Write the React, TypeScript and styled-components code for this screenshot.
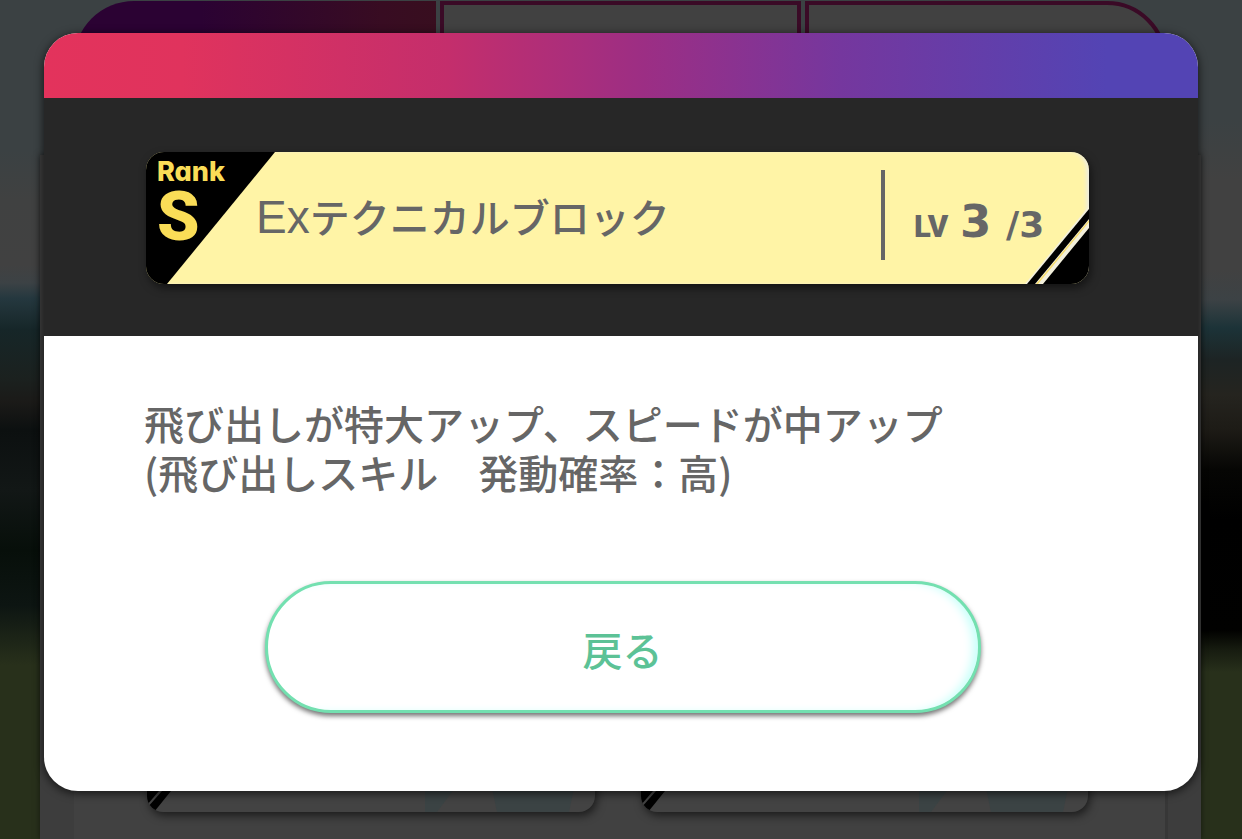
import React from "react";
import styled, { createGlobalStyle } from "styled-components";

const GlobalStyle = createGlobalStyle`
  *, *::before, *::after { box-sizing: border-box; }
  body {
    margin: 0;
    background: #28301b;
    font-family: "Liberation Sans", "Noto Sans CJK JP", sans-serif;
    color: #666;
  }
  h1, p { margin: 0; }
`;

const Screen = styled.div`
  display: grid;
  grid-template-columns: minmax(0, 1fr);
  min-height: 100vh;
  overflow: hidden;
  background:
    linear-gradient(
      180deg,
      #3b4143 0,
      #3b4143 120px,
      #414141 180px,
      #414141 270px,
      #3c4245 300px,
      #1c3338 328px,
      #1d2424 360px,
      #25241f 395px,
      #1d1b16 430px,
      #060604 470px,
      #000 520px,
      #010100 630px,
      #171c10 650px,
      #28301b 672px
    ) 100% 0 / 50% 100% no-repeat,
    linear-gradient(
      180deg,
      #3b4143 0,
      #3b4143 150px,
      #404141 200px,
      #414141 265px,
      #3c4245 283px,
      #25383f 298px,
      #162628 330px,
      #1b211f 378px,
      #1b1a18 402px,
      #0c1010 430px,
      #121716 490px,
      #070f0a 550px,
      #0d1512 605px,
      #28301b 665px
    );

  > * { grid-area: 1 / 1; }
`;

const Behind = styled.div`
  display: flex;
  flex-direction: column;
  min-width: 0;
  padding: 1px 41px 0 40px;
`;

const TabStrip = styled.div`
  display: grid;
  grid-template-columns: 1fr 1fr 1fr;
  gap: 4px;
  height: 154px;
  padding: 0 34px;
`;

const TabShape = styled.div<{ $kind: "active" | "middle" | "last" }>`
  height: 72px;
  border: ${(p) => (p.$kind === "active" ? "0" : "4px solid #3a0a26")};
  border-radius: ${(p) =>
    p.$kind === "active" ? "60px 0 0 0" : p.$kind === "last" ? "0 60px 0 0" : "0"};
  background: ${(p) =>
    p.$kind === "active"
      ? "linear-gradient(90deg, #2b0233 0, #2b0233 35%, #380c22 85%, #380e1f 100%)"
      : "#414141"};
`;

const ListPanel = styled.div`
  flex: 1;
  display: flex;
  padding: 0 33px 0 34px;
  background: #3d3d3d;
  box-shadow: 0 0 6px rgba(0, 0, 0, 0.5);
`;

const ListInner = styled.div`
  flex: 1;
  display: grid;
  grid-template-columns: 1fr 1fr;
  gap: 46px;
  align-items: end;
  padding: 0 77px 27px 73px;
  border-right: 3px solid #373737;
  background: #414141;
`;

const ListCard = styled.div`
  height: 132px;
  overflow: hidden;
  border-radius: 0 0 16px 16px;
  background: #434343;
  box-shadow: 2px 4px 8px rgba(0, 0, 0, 0.55);

  svg { display: block; }
`;

const Dialog = styled.main`
  align-self: start;
  z-index: 1;
  min-width: 0;
  margin: 33px 44px 48px;
  overflow: hidden;
  border-radius: 34px;
  background: #fff;
  box-shadow: 0 2px 8px 1px rgba(0, 0, 0, 0.6);
`;

const TitleBar = styled.div`
  height: 65px;
  background: linear-gradient(
    91deg,
    #e3335c 0,
    #e0335d 12%,
    #c42e6c 35%,
    #9c2e84 52%,
    #75379e 69%,
    #5344b4 92%,
    #5344b4 100%
  );
`;

const SkillBand = styled.section`
  padding: 54px 109px 52px 102px;
  background: #272727;
`;

const SkillCard = styled.div`
  position: relative;
  display: flex;
  align-items: center;
  height: 132px;
  overflow: hidden;
  border-radius: 18px;
  background: #fff4a6;
  box-shadow: 2px 4px 8px rgba(0, 0, 0, 0.5);

  &::after {
    content: "";
    position: absolute;
    inset: 0;
    border-radius: 18px;
    box-shadow: inset -4px 0 5px -2px #e8eaf0;
  }
`;

const Corner = styled.svg<{ $side: "left" | "right" }>`
  position: absolute;
  top: 0;
  z-index: 1;
  ${(p) => p.$side}: 0;
`;

const Rank = styled.div`
  z-index: 2;
  align-self: stretch;
  width: 110px;
  padding: 5px 0 0 11px;
  color: #fadd57;
`;

const RankLabel = styled.div`
  font: 800 27px/30px Inter, sans-serif;
  font-feature-settings: "cv11";
`;

const RankGrade = styled.div`
  font: 900 68px/60px Roboto, sans-serif;
`;

const SkillName = styled.h1`
  flex: 1;
  font-size: 40px;
  font-weight: 500;
  line-height: 48px;
  white-space: nowrap;
`;

const Latin = styled.span`
  font-size: 46px;
  font-weight: 400;
`;

const Level = styled.div`
  z-index: 2;
  display: flex;
  align-items: baseline;
  width: 208px;
  height: 90px;
  margin-bottom: 6px;
  padding: 24px 0 0 29px;
  border-left: 4px solid #666;
  font-family: "DejaVu Sans", sans-serif;
  font-weight: 700;
  line-height: 56px;
`;

const LevelLabel = styled.span`
  width: 46px;
  font: 900 31px/56px Roboto, sans-serif;
`;

const LevelNow = styled.span`
  width: 46px;
  font-size: 45px;
`;

const LevelMax = styled.span`
  font-size: 36px;
`;

const Body = styled.section`
  display: flex;
  flex-direction: column;
  gap: 84px;
  padding: 63px 97px 78px 100px;
`;

const Description = styled.p`
  font: 500 40px/49px "Noto Sans CJK JP", sans-serif;
`;

const BackButton = styled.button`
  align-self: center;
  width: 716px;
  max-width: 100%;
  height: 132px;
  padding: 4px 0 0;
  border: 3px solid #73e0b0;
  border-radius: 66px;
  background: #fff;
  box-shadow: 0 3px 5px rgba(0, 0, 0, 0.55), inset -8px 0 10px -3px #c8fffa;
  color: #5cc296;
  font: 500 40px/48px "Noto Sans CJK JP", sans-serif;
  cursor: pointer;
`;

const CardArt = () => (
  <svg width="448" height="132" viewBox="0 0 448 132" aria-hidden="true">
    <path d="M0 111h12L0 125z" fill="#000" />
    <path d="M15 111h9L7 132H3L0 128z" fill="#000" />
    <path d="M278 108h30L290 132H278z" fill="#3b4344" />
    <path d="M345 108h82L422 132H350z" fill="#3b4344" />
  </svg>
);

export default function App() {
  return (
    <>
      <GlobalStyle />
      <Screen>
        <Behind aria-hidden="true">
          <TabStrip>
            <TabShape $kind="active" />
            <TabShape $kind="middle" />
            <TabShape $kind="last" />
          </TabStrip>
          <ListPanel>
            <ListInner>
              <ListCard><CardArt /></ListCard>
              <ListCard><CardArt /></ListCard>
            </ListInner>
          </ListPanel>
        </Behind>
        <Dialog>
          <TitleBar />
          <SkillBand>
            <SkillCard>
              <Corner $side="left" width="130" height="132" viewBox="0 0 130 132" aria-hidden="true">
                <path d="M0 0h129L21 132H0z" fill="#000" />
              </Corner>
              <Corner $side="right" width="66" height="132" viewBox="0 0 66 132" aria-hidden="true">
                <path d="M2 132L66 54V80L23 132z" fill="#f3f0dc" />
                <path d="M4 132L66 57V67L12 132z" fill="#000" />
                <path d="M13 132L66 68V70L15 132z" fill="#f7dc6a" />
                <path d="M20 132L66 76V132z" fill="#000" />
              </Corner>
              <Rank>
                <RankLabel>Rank</RankLabel>
                <RankGrade>S</RankGrade>
              </Rank>
              <SkillName><Latin>Ex</Latin>テクニカルブロック</SkillName>
              <Level>
                <LevelLabel>LV</LevelLabel>
                <LevelNow>3</LevelNow>
                <LevelMax>/3</LevelMax>
              </Level>
            </SkillCard>
          </SkillBand>
          <Body>
            <Description>
              飛び出しが特大アップ、スピードが中アップ
              <br />
              (飛び出しスキル　発動確率：高)
            </Description>
            <BackButton type="button">戻る</BackButton>
          </Body>
        </Dialog>
      </Screen>
    </>
  );
}
